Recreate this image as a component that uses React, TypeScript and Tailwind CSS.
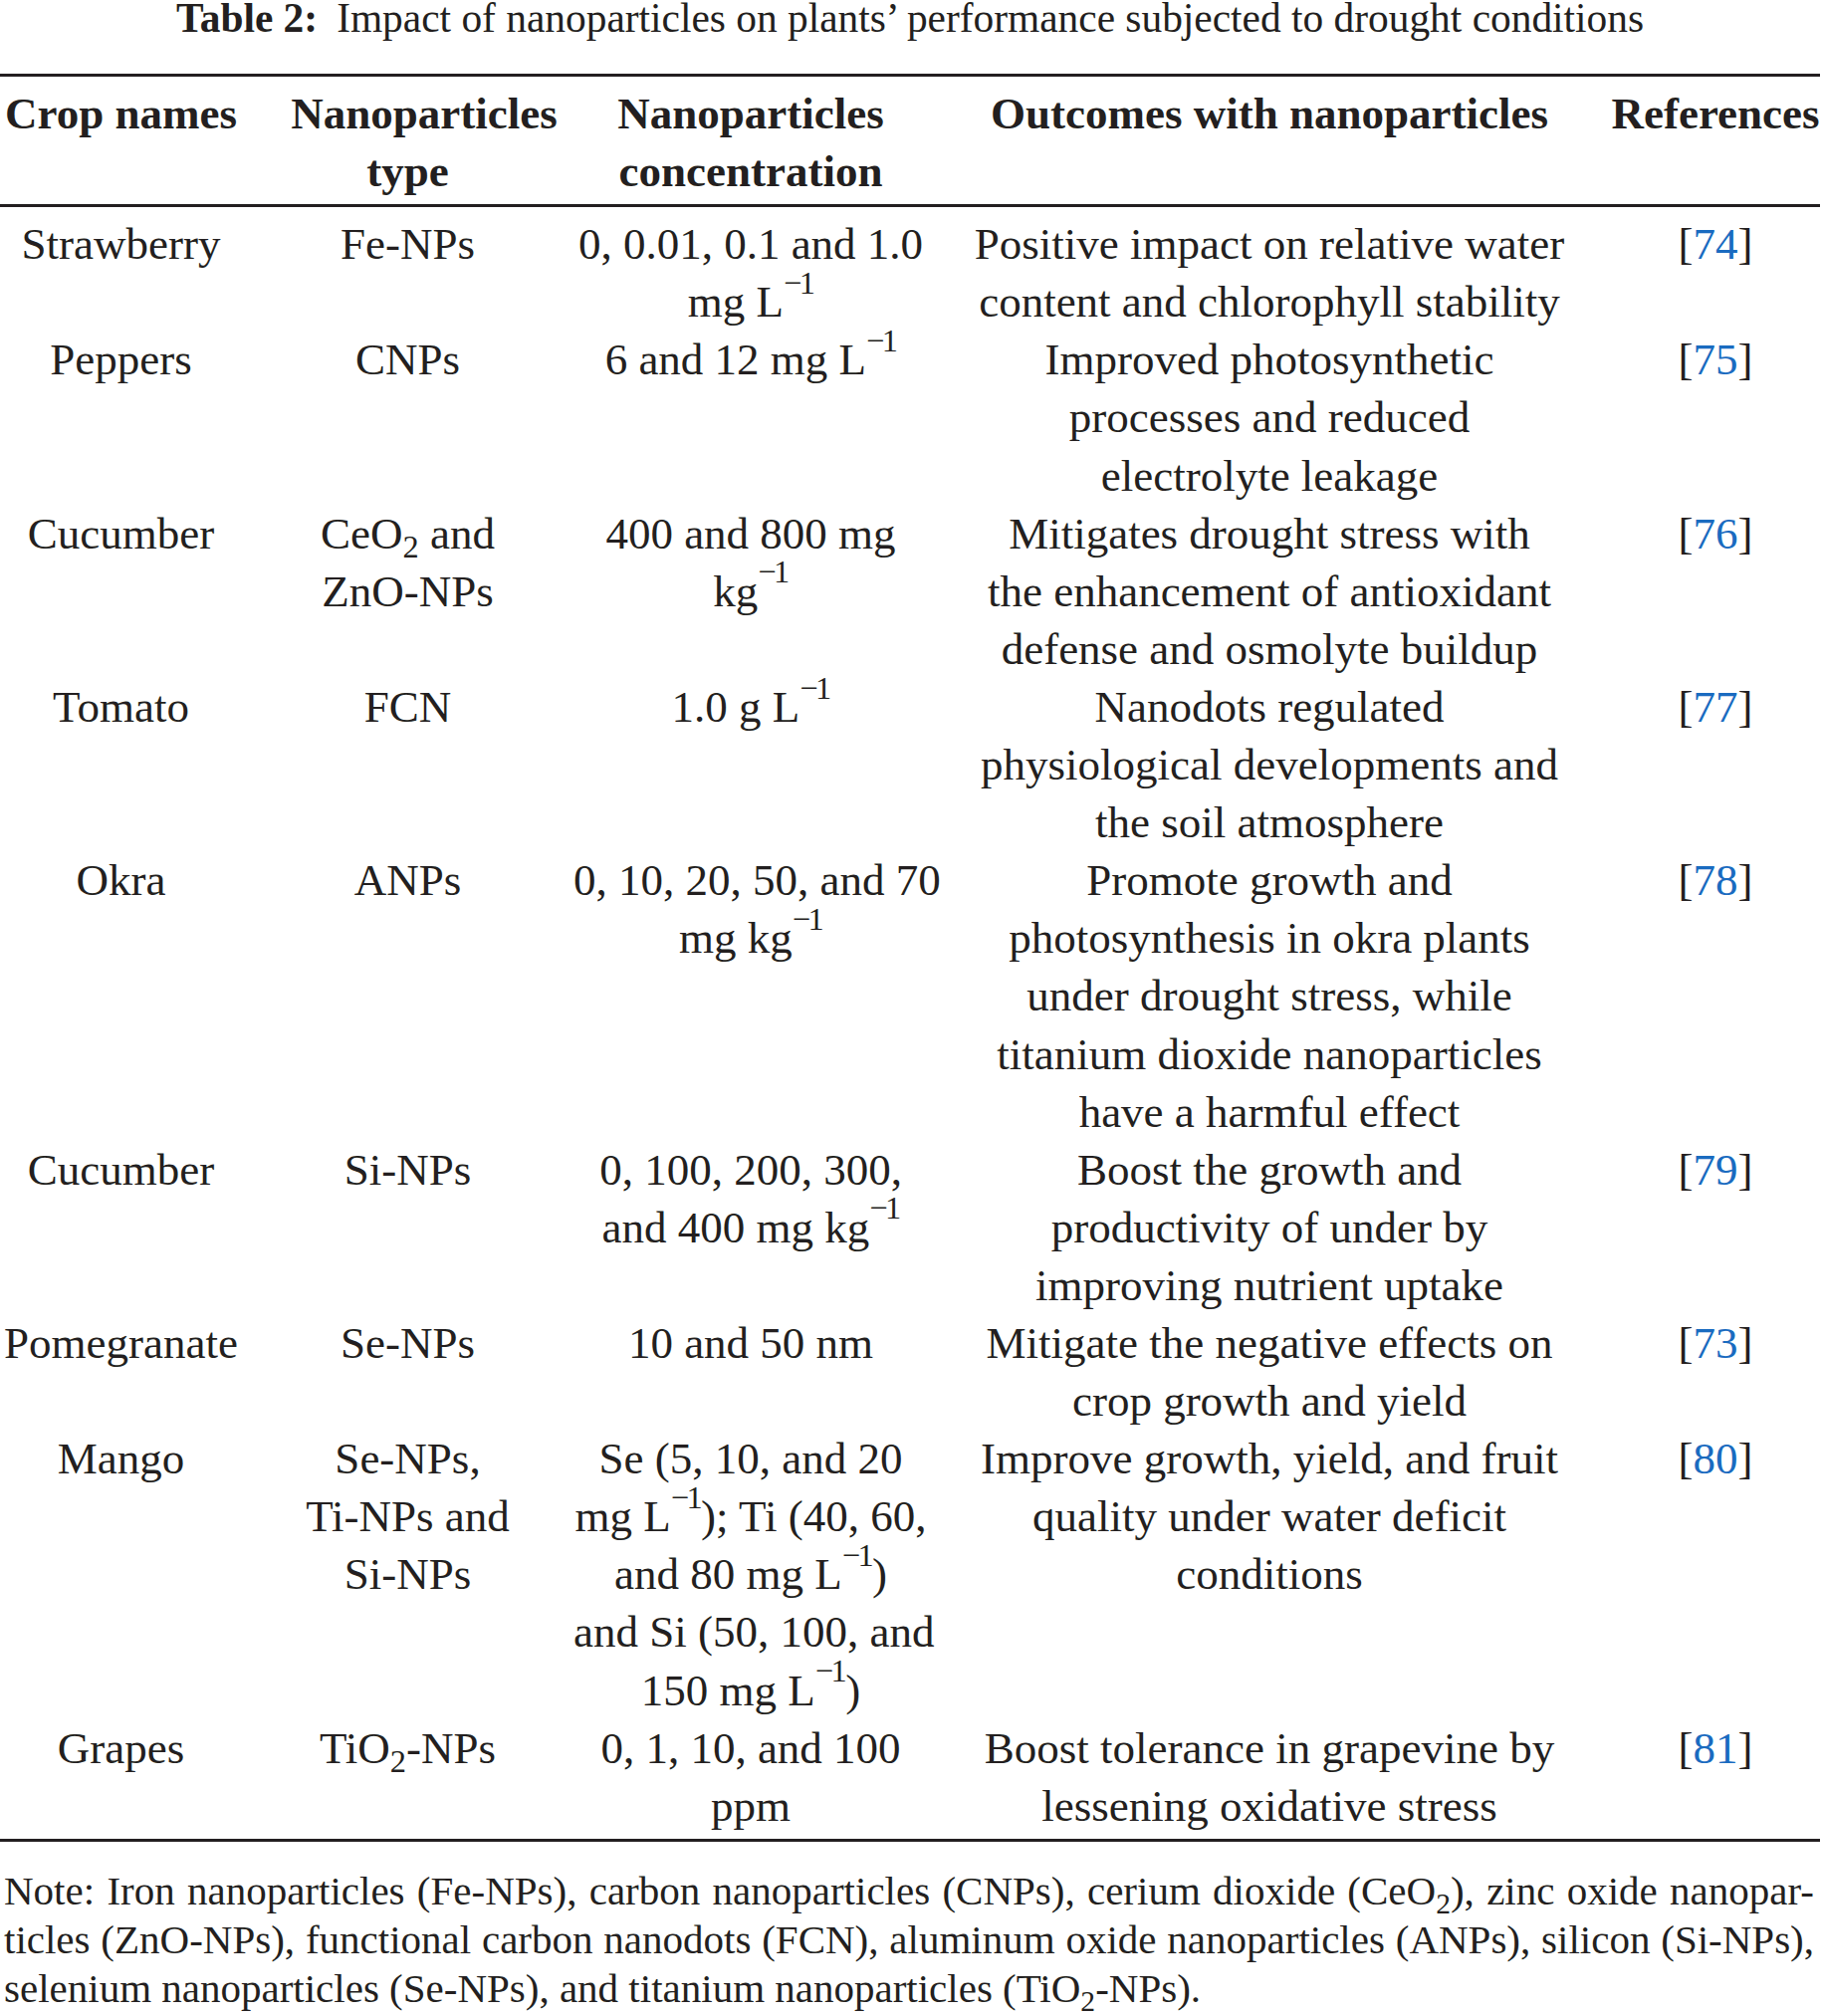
import type { ReactNode } from "react";

const Sup = ({ children }: { children: ReactNode }) => (
  <span className="relative -top-[0.72em] text-[0.72em] leading-none tracking-[-0.08em] mr-[1px]">
    {children}
  </span>
);

const Sub = ({ children }: { children: ReactNode }) => (
  <span className="relative top-[0.3em] text-[0.72em] leading-none">{children}</span>
);

const inv = <Sup>−1</Sup>;

type Row = {
  crop: ReactNode[];
  np: ReactNode[];
  conc: ReactNode[];
  outcome: ReactNode[];
  ref: string;
};

const rows: Row[] = [
  {
    crop: ["Strawberry"],
    np: ["Fe-NPs"],
    conc: ["0, 0.01, 0.1 and 1.0", <>mg L{inv}</>],
    outcome: ["Positive impact on relative water", "content and chlorophyll stability"],
    ref: "74",
  },
  {
    crop: ["Peppers"],
    np: ["CNPs"],
    conc: [<>6 and 12 mg L{inv}</>],
    outcome: ["Improved photosynthetic", "processes and reduced", "electrolyte leakage"],
    ref: "75",
  },
  {
    crop: ["Cucumber"],
    np: [<>CeO<Sub>2</Sub> and</>, "ZnO-NPs"],
    conc: ["400 and 800 mg", <>kg{inv}</>],
    outcome: [
      "Mitigates drought stress with",
      "the enhancement of antioxidant",
      "defense and osmolyte buildup",
    ],
    ref: "76",
  },
  {
    crop: ["Tomato"],
    np: ["FCN"],
    conc: [<>1.0 g L{inv}</>],
    outcome: ["Nanodots regulated", "physiological developments and", "the soil atmosphere"],
    ref: "77",
  },
  {
    crop: ["Okra"],
    np: ["ANPs"],
    conc: ["0, 10, 20, 50, and 70", <>mg kg{inv}</>],
    outcome: [
      "Promote growth and",
      "photosynthesis in okra plants",
      "under drought stress, while",
      "titanium dioxide nanoparticles",
      "have a harmful effect",
    ],
    ref: "78",
  },
  {
    crop: ["Cucumber"],
    np: ["Si-NPs"],
    conc: ["0, 100, 200, 300,", <>and 400 mg kg{inv}</>],
    outcome: ["Boost the growth and", "productivity of under by", "improving nutrient uptake"],
    ref: "79",
  },
  {
    crop: ["Pomegranate"],
    np: ["Se-NPs"],
    conc: ["10 and 50 nm"],
    outcome: ["Mitigate the negative effects on", "crop growth and yield"],
    ref: "73",
  },
  {
    crop: ["Mango"],
    np: ["Se-NPs,", "Ti-NPs and", "Si-NPs"],
    conc: [
      "Se (5, 10, and 20",
      <>mg L{inv}); Ti (40, 60,</>,
      <>and 80 mg L{inv})</>,
      "and Si (50, 100, and",
      <>150 mg L{inv})</>,
    ],
    outcome: ["Improve growth, yield, and fruit", "quality under water deficit", "conditions"],
    ref: "80",
  },
  {
    crop: ["Grapes"],
    np: [<>TiO<Sub>2</Sub>-NPs</>],
    conc: ["0, 1, 10, and 100", "ppm"],
    outcome: ["Boost tolerance in grapevine by", "lessening oxidative stress"],
    ref: "81",
  },
];

const cols = "grid grid-cols-[243px_333px_356px_686px_210px]";

const Cell = ({ lines }: { lines: ReactNode[] }) => (
  <div className="text-center whitespace-nowrap">
    {lines.map((l, i) => (
      <div key={i}>{l}</div>
    ))}
  </div>
);

const Rule = () => <div className="h-[3px] bg-[#231f20]" />;

export default function App() {
  return (
    <div className="min-h-screen bg-white text-[#231f20] font-['Liberation_Serif',serif]">
      <div className="w-[1828px]">
        <div className="h-[36px] leading-[36px] text-[41.4px] text-center whitespace-nowrap">
          <span className="font-bold mr-[0.46em]">Table 2:</span>
          Impact of nanoparticles on plants’ performance subjected to drought conditions
        </div>

        <div className="mt-[38px]">
          <Rule />
        </div>

        <div className={`${cols} pt-[8px] text-[45px] leading-[58.1px] font-bold`}>
          <Cell lines={["Crop names"]} />
          <div className="text-center whitespace-nowrap">
            <div className="pl-[33px]">Nanoparticles</div>
            <div>type</div>
          </div>
          <Cell lines={["Nanoparticles", "concentration"]} />
          <Cell lines={["Outcomes with nanoparticles"]} />
          <Cell lines={["References"]} />
        </div>

        <div className="mt-[4px]">
          <Rule />
        </div>

        <div className="pt-[8px] text-[45px] leading-[58.1px]">
          {rows.map((r, i) => (
            <div key={i} className={cols}>
              <Cell lines={r.crop} />
              <Cell lines={r.np} />
              <Cell lines={r.conc} />
              <Cell lines={r.outcome} />
              <div className="text-center whitespace-nowrap">
                [<span className="text-[#1a6bc0]">{r.ref}</span>]
              </div>
            </div>
          ))}
        </div>

        <div className="mt-[4px]">
          <Rule />
        </div>

        <div className="pt-[25px] pl-[4px] pr-[6px] text-[41px] leading-[49px]">
          <div className="text-justify [text-align-last:justify] whitespace-nowrap">
            Note: Iron nanoparticles (Fe-NPs), carbon nanoparticles (CNPs), cerium dioxide (CeO<Sub>2</Sub>), zinc oxide nanopar-
          </div>
          <div className="text-justify [text-align-last:justify] whitespace-nowrap">
            ticles (ZnO-NPs), functional carbon nanodots (FCN), aluminum oxide nanoparticles (ANPs), silicon (Si-NPs),
          </div>
          <div className="whitespace-nowrap">
            selenium nanoparticles (Se-NPs), and titanium nanoparticles (TiO<Sub>2</Sub>-NPs).
          </div>
        </div>
      </div>
    </div>
  );
}
